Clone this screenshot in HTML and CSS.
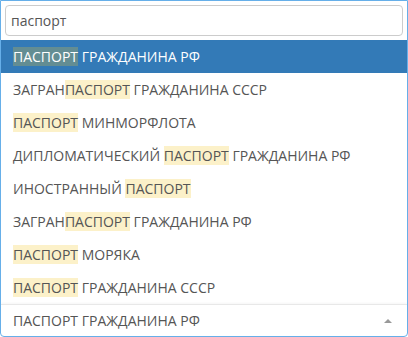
FILE: index.html
```html
<!DOCTYPE html>
<html lang="ru">
<head>
  <meta charset="UTF-8" />
  <meta name="viewport" content="width=device-width, initial-scale=1.0"/>
  <title>Документ</title>
  <link rel="stylesheet" href="styles.css">
</head>
<body>
  <div class="select-box">
    <div class="dropdown">
      <div class="search">
        <input class="search-field" type="text" value="паспорт" />
      </div>
      <ul class="results">
        <li class="option active"><span class="match">ПАСПОРТ</span> ГРАЖДАНИНА РФ</li>
        <li class="option">ЗАГРАН<span class="match">ПАСПОРТ</span> ГРАЖДАНИНА СССР</li>
        <li class="option"><span class="match">ПАСПОРТ</span> МИНМОРФЛОТА</li>
        <li class="option">ДИПЛОМАТИЧЕСКИЙ <span class="match">ПАСПОРТ</span> ГРАЖДАНИНА РФ</li>
        <li class="option">ИНОСТРАННЫЙ <span class="match">ПАСПОРТ</span></li>
        <li class="option">ЗАГРАН<span class="match">ПАСПОРТ</span> ГРАЖДАНИНА РФ</li>
        <li class="option"><span class="match">ПАСПОРТ</span> МОРЯКА</li>
        <li class="option"><span class="match">ПАСПОРТ</span> ГРАЖДАНИНА СССР</li>
      </ul>
    </div>
    <div class="selection">
      <span class="selected">ПАСПОРТ ГРАЖДАНИНА РФ</span>
      <span class="arrow"></span>
    </div>
  </div>
</body>
</html>
```

FILE: styles.css
```css
body {
  margin: 0;
  font-family: "Open Sans", "Noto Sans", sans-serif;
  font-size: 14px;
  color: #555;
}
.select-box {
  width: 408px;
  height: 337px;
  box-sizing: border-box;
  border: 1px solid #66afe9;
  border-radius: 0 0 4px 4px;
  display: flex;
  flex-direction: column;
  overflow: hidden;
}
.search {
  padding: 4px;
}
.search-field {
  display: block;
  width: 100%;
  height: 31px;
  box-sizing: border-box;
  border: 1px solid #ccc;
  border-radius: 4px;
  padding: 4px 5px;
  font-family: inherit;
  font-size: 14px;
  color: #555;
  outline: none;
}
.results {
  list-style: none;
  margin: 0;
  padding: 0;
}
.option {
  padding: 6px 12px;
  line-height: 21px;
  white-space: nowrap;
}
.option.active {
  background: #337ab7;
  color: #fff;
}
.match {
  background: rgba(245, 200, 41, 0.25);
}
.selection {
  flex: 1;
  display: flex;
  align-items: center;
  justify-content: space-between;
  padding: 0 12px;
  border-top: 1px solid #e8e8e8;
  box-shadow: 0 -1px 2px rgba(0, 0, 0, 0.04);
}
.arrow {
  width: 0;
  height: 0;
  border-left: 4px solid transparent;
  border-right: 4px solid transparent;
  border-bottom: 4px solid #999;
  margin-right: 3px;
}
```
